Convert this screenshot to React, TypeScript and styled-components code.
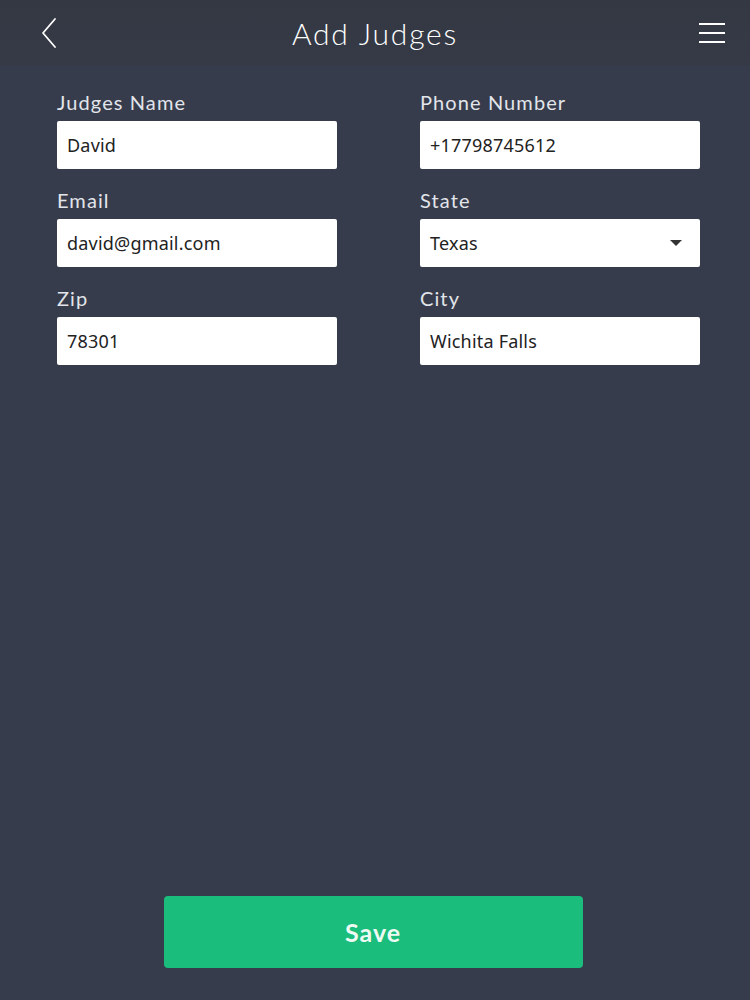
import React from "react";
import styled, { createGlobalStyle } from "styled-components";

const Global = createGlobalStyle`
  html, body { margin: 0; padding: 0; }
  body { background: #363c4c; }
  * { box-sizing: border-box; }
`;

const Page = styled.div`
  width: 750px;
  height: 1000px;
  display: flex;
  flex-direction: column;
  background: #363c4c;
`;

const Header = styled.header`
  height: 66px;
  background: linear-gradient(#343843, #353a46);
  display: grid;
  grid-template-columns: 1fr auto 1fr;
  align-items: center;
  padding: 0 24px;
`;

const Title = styled.h1`
  margin: 0;
  font-family: "Lato", sans-serif;
  font-weight: 300;
  font-size: 30px;
  letter-spacing: 1.8px;
  color: #ffffff;
`;

const IconButton = styled.button<{ $align: "start" | "end"; $offset?: number }>`
  background: none;
  border: none;
  padding: 0;
  height: 32px;
  margin-left: ${(p) => p.$offset ?? 0}px;
  display: flex;
  align-items: center;
  justify-self: ${(p) => p.$align};
  color: #fff;
`;

const Form = styled.div`
  display: grid;
  grid-template-columns: 280px 280px;
  column-gap: 83px;
  row-gap: 19px;
  padding: 24px 0 0 57px;
`;

const Field = styled.div`
  display: flex;
  flex-direction: column;
  gap: 7px;
`;

const Label = styled.label`
  font-family: "Lato", sans-serif;
  font-weight: 400;
  font-size: 20px;
  color: #e2e5ea;
  line-height: 24px;
  letter-spacing: 1.1px;
`;

const Box = styled.div`
  height: 48px;
  background: #ffffff;
  border-radius: 2px;
  display: flex;
  align-items: center;
  justify-content: space-between;
  padding: 0 18px 0 10px;
  font-family: "Noto Sans", sans-serif;
  font-size: 18px;
  letter-spacing: 0.2px;
  color: #222;
`;

const Caret = styled.span`
  width: 0;
  height: 0;
  border-left: 6px solid transparent;
  border-right: 6px solid transparent;
  border-top: 6px solid #333;
`;

const Spacer = styled.div`
  flex: 1;
`;

const Footer = styled.div`
  display: flex;
  justify-content: center;
  padding-bottom: 32px;
`;

const SaveButton = styled.button`
  width: 419px;
  height: 72px;
  margin-left: -4px;
  background: #1bbd7c;
  border: none;
  border-radius: 4px;
  font-family: "Lato", sans-serif;
  font-weight: 700;
  font-size: 25px;
  letter-spacing: 1px;
  color: #eefaf3;
`;

const fields = [
  { label: "Judges Name", value: "David" },
  { label: "Phone Number", value: "+17798745612" },
  { label: "Email", value: "david@gmail.com" },
  { label: "State", value: "Texas", select: true },
  { label: "Zip", value: "78301" },
  { label: "City", value: "Wichita Falls" },
];

export default function App() {
  return (
    <Page>
      <Global />
      <Header>
        <IconButton $align="start" $offset={16} aria-label="Back">
          <svg width="18" height="32" viewBox="0 0 18 32" fill="none">
            <path d="M15 2 L3 16 L15 30" stroke="#fff" strokeWidth="1.8" strokeLinecap="round" strokeLinejoin="round" />
          </svg>
        </IconButton>
        <Title>Add Judges</Title>
        <IconButton $align="end" aria-label="Menu">
          <svg width="28" height="22" viewBox="0 0 28 22" fill="none">
            <path d="M1 2 H27 M1 11 H27 M1 20 H27" stroke="#fff" strokeWidth="2.2" />
          </svg>
        </IconButton>
      </Header>
      <Form>
        {fields.map((f) => (
          <Field key={f.label}>
            <Label>{f.label}</Label>
            <Box>
              <span>{f.value}</span>
              {f.select && <Caret />}
            </Box>
          </Field>
        ))}
      </Form>
      <Spacer />
      <Footer>
        <SaveButton>Save</SaveButton>
      </Footer>
    </Page>
  );
}
